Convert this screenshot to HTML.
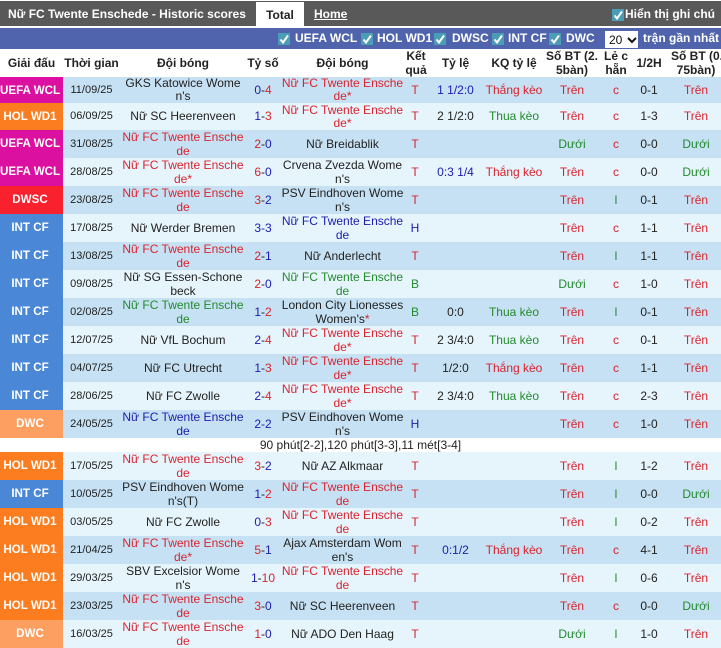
<!DOCTYPE html>
<html><head><meta charset="utf-8"><style>
html,body{margin:0;padding:0;background:#fff;width:721px;height:647px;overflow:hidden;font-family:"Liberation Sans",Arial,sans-serif}
#top{position:absolute;left:0;top:1px;width:721px;height:25px;background:#595959;color:#fff;font-weight:bold;font-size:12px;line-height:26px}
#top .t{position:absolute;left:8px;top:0}
#tab{position:absolute;left:256px;top:1px;width:48px;height:25px;background:#fff;color:#222;text-align:center}
#home{position:absolute;left:314px;top:0;text-decoration:underline}
#show{position:absolute;left:625px;top:0;font-size:12px}
#bar{position:absolute;left:0;top:28px;width:721px;height:21px;background:#4f64ac;color:#fff;font-weight:bold;font-size:12px;line-height:21px}
#bar span.l{position:absolute;top:0;white-space:nowrap}
.cb{position:absolute;width:12px;height:12px;background:#4a9db5;color:#fff}
.cb svg{display:block}
#sel{position:absolute;left:605px;top:3px;width:33px;height:17px;background:#fff;color:#111;font-weight:normal;font-size:12px;line-height:18px;padding-left:4px;box-sizing:border-box;white-space:nowrap}
table{position:absolute;left:0;top:50px;width:721px;border-collapse:collapse;table-layout:fixed;font-size:12px;line-height:14px;text-align:center;color:#222}
td{padding:0;overflow:hidden;white-space:nowrap}
tr.h td{height:27px;font-weight:bold;font-size:12px;line-height:13.5px;color:#222;background:#fff}
tr.a td{background:#c6e1f3;height:28px}
tr.b td{background:#e6f4fc;height:28px}
tr.n td{background:#fff;height:14px;line-height:14px;padding-top:0}
tr.s td{line-height:13px}
tr.s1 td{height:26px}
tr.s2 td{height:27px}
td.L{color:#fff;font-weight:bold;font-size:11.6px;padding-right:3px;box-sizing:border-box}
tr.a td:nth-child(2),tr.b td:nth-child(2){font-size:11px}
tr.a td:nth-child(6),tr.b td:nth-child(6){padding-right:2px}
td:nth-child(11){padding-right:5px}
.w{background:#dc10a0!important}.o{background:#fb7d20!important}.d{background:#f9212d!important}.i{background:#4a87d6!important}.c{background:#fd9f60!important}
.R{color:#d8242f}.B{color:#1c1cb0}.G{color:#238a2d}.K{color:#222}
</style></head><body>
<div id="top"><span class="t">Nữ FC Twente Enschede - Historic scores</span><div id="tab">Total</div><span id="home">Home</span>
<span class="cb" style="left:612px;top:8px"><svg width="12" height="12"><path d="M2.5 6.5L5 9.5L10 2.5" stroke="#fff" stroke-width="2" fill="none"/></svg></span><span id="show">Hiển thị ghi chú</span></div>
<div id="bar">
<span class="cb" style="left:278px;top:5px"><svg width="12" height="12"><path d="M2.5 6.5L5 9.5L10 2.5" stroke="#fff" stroke-width="2" fill="none"/></svg></span><span class="l" style="left:295px">UEFA WCL</span>
<span class="cb" style="left:361px;top:5px"><svg width="12" height="12"><path d="M2.5 6.5L5 9.5L10 2.5" stroke="#fff" stroke-width="2" fill="none"/></svg></span><span class="l" style="left:377px">HOL WD1</span>
<span class="cb" style="left:434px;top:5px"><svg width="12" height="12"><path d="M2.5 6.5L5 9.5L10 2.5" stroke="#fff" stroke-width="2" fill="none"/></svg></span><span class="l" style="left:452px">DWSC</span>
<span class="cb" style="left:492px;top:5px"><svg width="12" height="12"><path d="M2.5 6.5L5 9.5L10 2.5" stroke="#fff" stroke-width="2" fill="none"/></svg></span><span class="l" style="left:508px">INT CF</span>
<span class="cb" style="left:549px;top:5px"><svg width="12" height="12"><path d="M2.5 6.5L5 9.5L10 2.5" stroke="#fff" stroke-width="2" fill="none"/></svg></span><span class="l" style="left:566px">DWC</span>
<div id="sel">20 <svg width="10" height="7" style="margin-left:1px"><path d="M1 1L5 5L9 1" stroke="#111" stroke-width="2" fill="none"/></svg></div>
<span class="l" style="left:643px">trận gần nhất</span></div>
<table>
<colgroup><col style="width:63px"><col style="width:57px"><col style="width:126px"><col style="width:34px"><col style="width:125px"><col style="width:22px"><col style="width:57px"><col style="width:60px"><col style="width:56px"><col style="width:32px"><col style="width:39px"><col style="width:50px"></colgroup>
<tr class="h"><td>Giải đấu</td><td>Thời gian</td><td>Đội bóng</td><td>Tỷ số</td><td>Đội bóng</td><td>Kết<br>quả</td><td>Tỷ lệ</td><td>KQ tỷ lệ</td><td>Số BT (2.<br>5bàn)</td><td>Lẻ c<br>hẵn</td><td>1/2H</td><td>Số BT (0.<br>75bàn)</td></tr>
<tr class="a s s1"><td class="L w">UEFA WCL</td><td>11/09/25</td><td>GKS Katowice Wome<br>n's</td><td><span class="B">0</span>-<span class="R">4</span></td><td class="R">Nữ FC Twente Ensche<br>de*</td><td class="R">T</td><td class="B">1 1/2:0</td><td class="R">Thắng kèo</td><td class="R">Trên</td><td class="R">c</td><td>0-1</td><td class="R">Trên</td></tr>
<tr class="b s s2"><td class="L o">HOL WD1</td><td>06/09/25</td><td>Nữ SC Heerenveen</td><td><span class="B">1</span>-<span class="R">3</span></td><td class="R">Nữ FC Twente Ensche<br>de*</td><td class="R">T</td><td>2 1/2:0</td><td class="G">Thua kèo</td><td class="R">Trên</td><td class="R">c</td><td>1-3</td><td class="R">Trên</td></tr>
<tr class="a"><td class="L w">UEFA WCL</td><td>31/08/25</td><td class="R">Nữ FC Twente Ensche<br>de</td><td><span class="R">2</span>-<span class="B">0</span></td><td>Nữ Breidablik</td><td class="R">T</td><td></td><td></td><td class="G">Dưới</td><td class="R">c</td><td>0-0</td><td class="G">Dưới</td></tr>
<tr class="b"><td class="L w">UEFA WCL</td><td>28/08/25</td><td class="R">Nữ FC Twente Ensche<br>de*</td><td><span class="R">6</span>-<span class="B">0</span></td><td>Crvena Zvezda Wome<br>n's</td><td class="R">T</td><td class="B">0:3 1/4</td><td class="R">Thắng kèo</td><td class="R">Trên</td><td class="R">c</td><td>0-0</td><td class="G">Dưới</td></tr>
<tr class="a"><td class="L d">DWSC</td><td>23/08/25</td><td class="R">Nữ FC Twente Ensche<br>de</td><td><span class="R">3</span>-<span class="B">2</span></td><td>PSV Eindhoven Wome<br>n's</td><td class="R">T</td><td></td><td></td><td class="R">Trên</td><td class="G">l</td><td>0-1</td><td class="R">Trên</td></tr>
<tr class="b"><td class="L i">INT CF</td><td>17/08/25</td><td>Nữ Werder Bremen</td><td class="B">3-3</td><td class="B">Nữ FC Twente Ensche<br>de</td><td class="B">H</td><td></td><td></td><td class="R">Trên</td><td class="R">c</td><td>1-1</td><td class="R">Trên</td></tr>
<tr class="a"><td class="L i">INT CF</td><td>13/08/25</td><td class="R">Nữ FC Twente Ensche<br>de</td><td><span class="R">2</span>-<span class="B">1</span></td><td>Nữ Anderlecht</td><td class="R">T</td><td></td><td></td><td class="R">Trên</td><td class="G">l</td><td>1-1</td><td class="R">Trên</td></tr>
<tr class="b"><td class="L i">INT CF</td><td>09/08/25</td><td>Nữ SG Essen-Schone<br>beck</td><td><span class="R">2</span>-<span class="B">0</span></td><td class="G">Nữ FC Twente Ensche<br>de</td><td class="G">B</td><td></td><td></td><td class="G">Dưới</td><td class="R">c</td><td>1-0</td><td class="R">Trên</td></tr>
<tr class="a"><td class="L i">INT CF</td><td>02/08/25</td><td class="G">Nữ FC Twente Ensche<br>de</td><td><span class="B">1</span>-<span class="R">2</span></td><td>London City Lionesses<br>Women's<span class="R">*</span></td><td class="G">B</td><td>0:0</td><td class="G">Thua kèo</td><td class="R">Trên</td><td class="G">l</td><td>0-1</td><td class="R">Trên</td></tr>
<tr class="b"><td class="L i">INT CF</td><td>12/07/25</td><td>Nữ VfL Bochum</td><td><span class="B">2</span>-<span class="R">4</span></td><td class="R">Nữ FC Twente Ensche<br>de*</td><td class="R">T</td><td>2 3/4:0</td><td class="G">Thua kèo</td><td class="R">Trên</td><td class="R">c</td><td>0-1</td><td class="R">Trên</td></tr>
<tr class="a"><td class="L i">INT CF</td><td>04/07/25</td><td>Nữ FC Utrecht</td><td><span class="B">1</span>-<span class="R">3</span></td><td class="R">Nữ FC Twente Ensche<br>de*</td><td class="R">T</td><td>1/2:0</td><td class="R">Thắng kèo</td><td class="R">Trên</td><td class="R">c</td><td>1-1</td><td class="R">Trên</td></tr>
<tr class="b"><td class="L i">INT CF</td><td>28/06/25</td><td>Nữ FC Zwolle</td><td><span class="B">2</span>-<span class="R">4</span></td><td class="R">Nữ FC Twente Ensche<br>de*</td><td class="R">T</td><td>2 3/4:0</td><td class="G">Thua kèo</td><td class="R">Trên</td><td class="R">c</td><td>2-3</td><td class="R">Trên</td></tr>
<tr class="a"><td class="L c">DWC</td><td>24/05/25</td><td class="B">Nữ FC Twente Ensche<br>de</td><td class="B">2-2</td><td>PSV Eindhoven Wome<br>n's</td><td class="B">H</td><td></td><td></td><td class="R">Trên</td><td class="R">c</td><td>1-0</td><td class="R">Trên</td></tr>
<tr class="n"><td colspan="12" style="text-align:center;padding-right:0">90 phút[2-2],120 phút[3-3],11 mét[3-4]</td></tr>
<tr class="b"><td class="L o">HOL WD1</td><td>17/05/25</td><td class="R">Nữ FC Twente Ensche<br>de</td><td><span class="R">3</span>-<span class="B">2</span></td><td>Nữ AZ Alkmaar</td><td class="R">T</td><td></td><td></td><td class="R">Trên</td><td class="G">l</td><td>1-2</td><td class="R">Trên</td></tr>
<tr class="a"><td class="L i">INT CF</td><td>10/05/25</td><td>PSV Eindhoven Wome<br>n's(T)</td><td><span class="B">1</span>-<span class="R">2</span></td><td class="R">Nữ FC Twente Ensche<br>de</td><td class="R">T</td><td></td><td></td><td class="R">Trên</td><td class="G">l</td><td>0-0</td><td class="G">Dưới</td></tr>
<tr class="b"><td class="L o">HOL WD1</td><td>03/05/25</td><td>Nữ FC Zwolle</td><td><span class="B">0</span>-<span class="R">3</span></td><td class="R">Nữ FC Twente Ensche<br>de</td><td class="R">T</td><td></td><td></td><td class="R">Trên</td><td class="G">l</td><td>0-2</td><td class="R">Trên</td></tr>
<tr class="a"><td class="L o">HOL WD1</td><td>21/04/25</td><td class="R">Nữ FC Twente Ensche<br>de*</td><td><span class="R">5</span>-<span class="B">1</span></td><td>Ajax Amsterdam Wom<br>en's</td><td class="R">T</td><td class="B">0:1/2</td><td class="R">Thắng kèo</td><td class="R">Trên</td><td class="R">c</td><td>4-1</td><td class="R">Trên</td></tr>
<tr class="b"><td class="L o">HOL WD1</td><td>29/03/25</td><td>SBV Excelsior Wome<br>n's</td><td><span class="B">1</span>-<span class="R">10</span></td><td class="R">Nữ FC Twente Ensche<br>de</td><td class="R">T</td><td></td><td></td><td class="R">Trên</td><td class="G">l</td><td>0-6</td><td class="R">Trên</td></tr>
<tr class="a"><td class="L o">HOL WD1</td><td>23/03/25</td><td class="R">Nữ FC Twente Ensche<br>de</td><td><span class="R">3</span>-<span class="B">0</span></td><td>Nữ SC Heerenveen</td><td class="R">T</td><td></td><td></td><td class="R">Trên</td><td class="R">c</td><td>0-0</td><td class="G">Dưới</td></tr>
<tr class="b"><td class="L c">DWC</td><td>16/03/25</td><td class="R">Nữ FC Twente Ensche<br>de</td><td><span class="R">1</span>-<span class="B">0</span></td><td>Nữ ADO Den Haag</td><td class="R">T</td><td></td><td></td><td class="G">Dưới</td><td class="G">l</td><td>1-0</td><td class="R">Trên</td></tr>
</table>
</body></html>
